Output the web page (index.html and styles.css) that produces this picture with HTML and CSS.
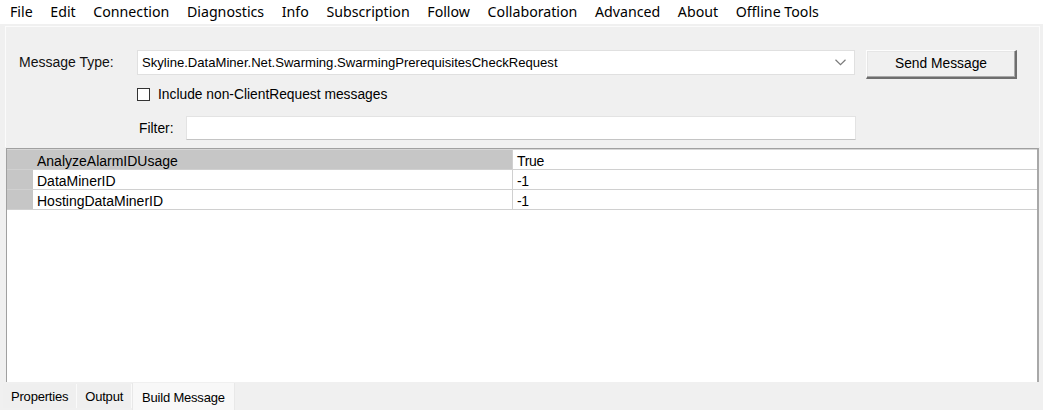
FILE: index.html
```html
<!DOCTYPE html>
<html>
<head>
<meta charset="utf-8">
<link rel="stylesheet" href="styles.css">
</head>
<body>
<div class="app">
  <nav class="menubar">
    <span class="mi">File</span>
    <span class="mi">Edit</span>
    <span class="mi">Connection</span>
    <span class="mi">Diagnostics</span>
    <span class="mi">Info</span>
    <span class="mi">Subscription</span>
    <span class="mi">Follow</span>
    <span class="mi">Collaboration</span>
    <span class="mi">Advanced</span>
    <span class="mi">About</span>
    <span class="mi">Offline Tools</span>
  </nav>
  <div class="main">
    <div class="toppanel">
      <div class="row1">
        <span class="lbl-type">Message Type:</span>
        <div class="combo">
          <span class="combo-text">Skyline.DataMiner.Net.Swarming.SwarmingPrerequisitesCheckRequest</span>
          <svg class="chev" width="11" height="7" viewBox="0 0 11 7"><path d="M0.5 0.8 L5.5 5.6 L10.5 0.8" fill="none" stroke="#7a7a7a" stroke-width="1.2"/></svg>
        </div>
        <button class="send">Send Message</button>
      </div>
      <label class="row2">
        <span class="cb"></span>
        <span class="cb-text">Include non-ClientRequest messages</span>
      </label>
      <div class="row3">
        <span class="lbl-filter">Filter:</span>
        <div class="filter-input"></div>
      </div>
    </div>
    <div class="propgrid">
      <div class="prow sel">
        <div class="rh"></div>
        <div class="pname">AnalyzeAlarmIDUsage</div>
        <div class="pval">True</div>
      </div>
      <div class="prow">
        <div class="rh"></div>
        <div class="pname">DataMinerID</div>
        <div class="pval">-1</div>
      </div>
      <div class="prow">
        <div class="rh"></div>
        <div class="pname">HostingDataMinerID</div>
        <div class="pval">-1</div>
      </div>
    </div>
  </div>
  <div class="tabs">
    <span class="tab">Properties</span>
    <span class="tab">Output</span>
    <span class="tab active">Build Message</span>
  </div>
</div>
</body>
</html>
```
FILE: styles.css
```css
html, body {
  margin: 0;
  padding: 0;
  background: #f0f0f0;
}
body {
  width: 1043px;
  height: 410px;
  overflow: hidden;
  font-family: "Liberation Sans", Arial, sans-serif;
  font-size: 13px;
  color: #000;
}
.app {
  display: flex;
  flex-direction: column;
  height: 410px;
}
.menubar {
  height: 24px;
  background: #fff;
  display: flex;
  align-items: center;
  padding-left: 1px;
  font-family: "Noto Sans", sans-serif;
  font-size: 14.2px;
  flex: none;
}
.mi {
  padding: 0 8.8px;
  line-height: 24px;
}
.mi:first-child {
  padding-left: 9px;
}
.main {
  flex: 1;
  display: flex;
  flex-direction: column;
  background: #f0f0f0;
}
.toppanel {
  margin: 2px 3px 0 5px;
  height: 121px;
  border-top: 1px solid #fbfbfb;
  border-left: 1px solid #fbfbfb;
  border-right: 1px solid #fbfbfb;
  box-sizing: border-box;
  padding-top: 23px;
  flex: none;
}
.row1 {
  display: flex;
  align-items: flex-start;
  height: 28px;
}
.lbl-type {
  width: 131px;
  padding-left: 13px;
  box-sizing: border-box;
  margin-top: 4px;
  font-size: 14px;
  color: #111;
}
.combo {
  width: 718px;
  height: 25px;
  box-sizing: border-box;
  background: #fff;
  border: 1px solid #e0e0e0;
  display: flex;
  align-items: center;
  justify-content: space-between;
  padding: 0 8px 0 4px;
}
.combo-text {
  font-size: 13.1px;
}
.chev {
  display: block;
}
.send {
  margin-left: 11px;
  width: 151px;
  height: 29px;
  box-sizing: border-box;
  background: #f0f0f0;
  font-family: "Liberation Sans", Arial, sans-serif;
  font-size: 13.8px;
  color: #000;
  border-top: 1px solid #fdfdfd;
  border-left: 1px solid #fdfdfd;
  border-right: 2px solid #6e6e6e;
  border-bottom: 2px solid #6e6e6e;
  box-shadow: inset -1px -1px 0 #a8a8a8, inset 1px 1px 0 #e6e6e6;
  padding: 0 0 1px 0;
}
.row2 {
  display: flex;
  align-items: center;
  margin-top: 9px;
  margin-left: 131px;
  height: 15px;
}
.cb {
  width: 13px;
  height: 13px;
  box-sizing: border-box;
  border: 1px solid #333;
  background: #fff;
}
.cb-text {
  margin-left: 8px;
  font-size: 13.8px;
}
.row3 {
  display: flex;
  align-items: center;
  margin-top: 14px;
  margin-left: 133px;
  height: 24px;
}
.lbl-filter {
  width: 47px;
  font-size: 13.8px;
}
.filter-input {
  width: 670px;
  height: 24px;
  box-sizing: border-box;
  background: #fff;
  border: 1px solid #e3e3e3;
  border-bottom-color: #c4c4c4;
}
.propgrid {
  flex: 1;
  margin: 1px 4px 1px 6px;
  background: #fff;
  border-top: 1px solid #a0a0a0;
  border-left: 1px solid #a0a0a0;
  border-right: 2px solid #a8a8a8;
  box-shadow: inset 0 1px 0 #d6d6d6;
  padding-top: 1px;
}
.prow {
  display: flex;
  height: 19px;
  border-bottom: 1px solid #d0d0d0;
}
.rh {
  width: 26px;
  background: #c6c6c6;
  flex: none;
}
.pname {
  width: 480px;
  box-sizing: border-box;
  padding-left: 4px;
  padding-top: 1px;
  line-height: 20px;
  font-size: 14px;
  border-right: 1px solid #d0d0d0;
  flex: none;
  overflow: visible;
}
.prow.sel .pname {
  background: #c6c6c6;
}
.pval {
  flex: 1;
  padding-left: 4px;
  padding-top: 1px;
  line-height: 20px;
  font-size: 14px;
  letter-spacing: -0.3px;
}
.tabs {
  height: 27px;
  flex: none;
  display: flex;
  align-items: stretch;
  padding-left: 3px;
  background: #f0f0f0;
}
.tab {
  display: flex;
  align-items: center;
  padding: 0 8px;
  font-size: 13px;
  border-right: 1px solid #fafafa;
  height: 24px;
  margin-top: 1px;
  background: #efefef;
  letter-spacing: -0.2px;
}
.tab.active {
  background: #f8f8f8;
  height: 27px;
  margin-top: 0;
  padding: 2px 9px 0 9px;
  box-sizing: border-box;
  border-left: 1px solid #e8e8e8;
  border-right: 1px solid #e8e8e8;
}
```
